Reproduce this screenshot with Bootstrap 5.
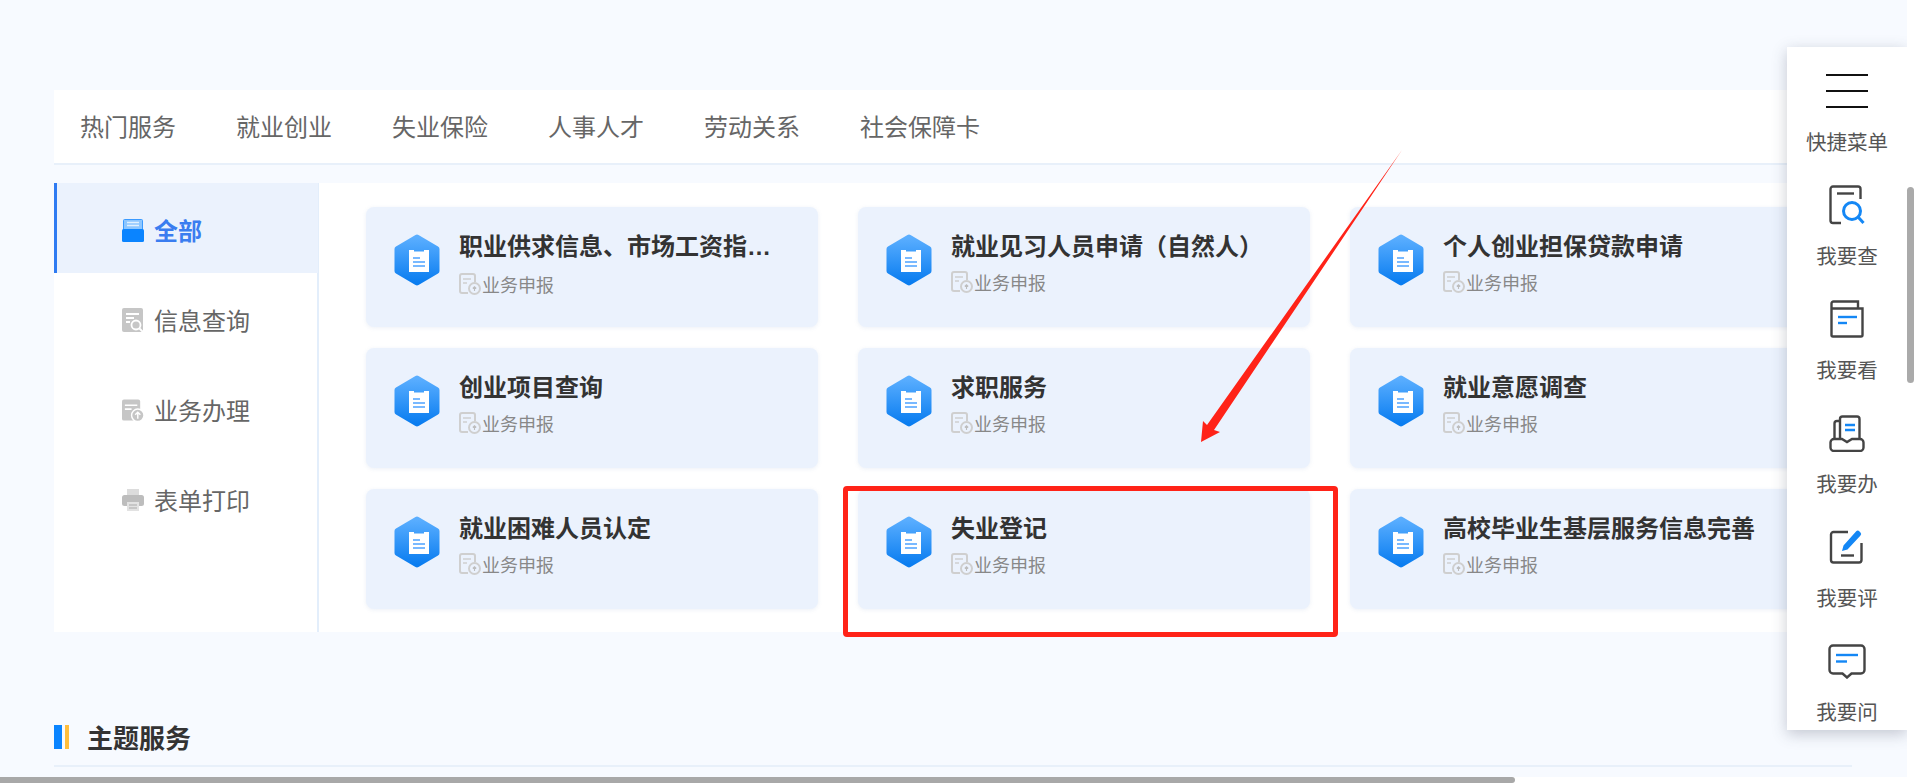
<!DOCTYPE html>
<html lang="zh-CN">
<head>
    <meta charset="UTF-8">
    <meta name="viewport" content="width=device-width, initial-scale=1.0">
    <title>热门服务</title>
    <link href="https://cdn.jsdelivr.net/npm/bootstrap@5.3.0/dist/css/bootstrap.min.css" rel="stylesheet">
    <style>
        html, body { height: 100%; overflow: hidden; background: #fff; }
        body { font-family: "Noto Sans CJK SC", "Liberation Sans", sans-serif; color: #333; }
        .page-view { width: 1907px; height: 777px; background: #f7faff; padding: 90px 55px 0 54px; overflow: hidden; position: relative; }

        /* tabs */
        .tab-bar { height: 75px; background: #fff; border-bottom: 2px solid #e8f0fa; padding-left: 26px; gap: 60px; }
        .tab-item { font-size: 24px; color: #666; line-height: 71px; }

        /* panel */
        .service-panel { height: 449px; margin-top: 18px; background: #fff; }
        .side-menu { width: 265px; flex: none; border-right: 2px solid #e3eefb; }
        .side-item { height: 90px; padding: 4px 0 0 68px; gap: 10px; font-size: 24px; color: #666; }
        .side-item.is-active { background: #ebf2fd; border-left: 3px solid #2f7bf2; padding-left: 65px; color: #3a7df0; font-weight: 700; margin-right: -1px; }
        .card-grid { display: grid; grid-template-columns: repeat(3, 452px); grid-auto-rows: 120px; column-gap: 40px; row-gap: 21px; padding: 24px 0 0 47px; }
        .svc-card { background: #ebf2fd; border: 0; border-radius: 8px; box-shadow: 0 1px 4px rgba(120, 150, 200, .14); padding: 27px 0 0 28px; gap: 19px; }
        .hex-icon { width: 46px; height: 52px; flex: none; }
        .svc-title { font-size: 24px; font-weight: 700; line-height: 26px; margin-top: -2px; color: #333; white-space: nowrap; }
        .svc-title-end { font-family: "Liberation Sans", sans-serif; }
        .svc-sub { margin-top: 12px; font-size: 18px; line-height: 24px; color: #888; gap: 1px; }

        /* section heading */
        .topic-head { margin-top: 93px; height: 42px; border-bottom: 2px solid #e8f0fa; }
        .topic-bar { width: 8px; height: 24px; background: #0a84ff; }
        .topic-bar2 { width: 4px; height: 24px; background: #ffbe3d; margin-left: 3px; }
        .topic-title { font-size: 26px; font-weight: 700; line-height: 26px; margin: -1px 0 0 18px; color: #333; }

        /* annotation over the page */
        .note-box { position: absolute; left: 843px; top: 486px; width: 495px; height: 151px; border: 5px solid #ff2318; border-radius: 4px; }
        .note-arrow { position: absolute; left: 0; top: 0; pointer-events: none; }

        /* floating quick menu */
        .quick-menu { position: absolute; left: 1787px; top: 47px; width: 120px; height: 683px; background: #fff; box-shadow: 0 4px 14px rgba(60, 70, 90, .28); }
        .quick-item { height: 114px; flex: none; }
        .quick-icon { height: 88px; }
        .quick-label { font-size: 20.5px; line-height: 16px; margin-top: -2px; color: #555; white-space: nowrap; }

        /* scrollbars */
        .bar-v { position: absolute; left: 1907px; top: 187px; width: 7px; height: 196px; background: #aaa; border-radius: 4px; }
        .bar-h { position: absolute; left: 0; top: 777px; width: 1515px; height: 6px; background: #a8a8a8; border-radius: 0 4px 4px 0; }
    </style>
</head>
<body>

    <!-- shared icons -->
    <svg width="0" height="0" class="position-absolute">
        <defs>
            <linearGradient id="hexFill" x1="0" y1="0" x2="0" y2="1">
                <stop offset="0" stop-color="#5aaeff"/>
                <stop offset="1" stop-color="#0a7df0"/>
            </linearGradient>
            <symbol id="hexDoc" viewBox="0 0 46 52">
                <path d="M23 3.500 42.500 15V37L23 48.500 3.500 37V15Z" fill="url(#hexFill)" stroke="url(#hexFill)" stroke-width="6" stroke-linejoin="round"/>
                <path d="M15 16h5v1.500h10V16h5v22H15z" fill="#fff"/>
                <path d="M19 24h7M19 28h12M19 32h12" stroke="#4da3ff" stroke-width="1.600" fill="none"/>
            </symbol>
            <symbol id="smallDoc" viewBox="0 0 22 22">
                <path d="M9 20H3a2 2 0 0 1-2-2V3a2 2 0 0 1 2-2h11a2 2 0 0 1 2 2v6" fill="none" stroke="#cfcfcf" stroke-width="2"/>
                <path d="M4 6h8M4 10h4" stroke="#cfcfcf" stroke-width="1.500"/>
                <circle cx="15.500" cy="15.500" r="5.500" fill="none" stroke="#cfcfcf" stroke-width="2"/>
                <path d="M15.500 18v-4M13.800 15.500l1.700-1.800 1.700 1.800" stroke="#bdbdbd" stroke-width="1.100" fill="none"/>
            </symbol>
        </defs>
    </svg>

    <div class="page-view">
        <!-- Tabs -->
        <div class="tab-bar d-flex">
            <div class="tab-item">热门服务</div>
            <div class="tab-item">就业创业</div>
            <div class="tab-item">失业保险</div>
            <div class="tab-item">人事人才</div>
            <div class="tab-item">劳动关系</div>
            <div class="tab-item">社会保障卡</div>
        </div>

        <!-- Service panel -->
        <div class="service-panel d-flex">
            <div class="side-menu">
                <div class="side-item is-active d-flex align-items-center">
                    <svg width="22" height="23" viewBox="0 0 22 23"><rect x="1.500" y=".5" width="19" height="11" rx="1" fill="#8cc6ff" stroke="#3a9aff"/><path d="M5 3.500h12M5 6.500h12" stroke="#dff0ff" stroke-width="1.300"/><rect y="10" width="22" height="13" rx="1.500" fill="#0a84ff"/></svg>
                    <span>全部</span>
                </div>
                <div class="side-item d-flex align-items-center">
                    <svg width="22" height="25" viewBox="0 0 22 25"><path d="M2 0h17a2 2 0 0 1 2 2v22H2a2 2 0 0 1-2-2V2a2 2 0 0 1 2-2z" fill="#c6c6c6"/><path d="M4 6h13M4 10h8M4 14h4" stroke="#fff" stroke-width="1.800"/><circle cx="14" cy="17" r="4.500" fill="#c6c6c6" stroke="#fff" stroke-width="1.800"/><path d="M17.500 20.500 21 24" stroke="#fff" stroke-width="1.800"/></svg>
                    <span>信息查询</span>
                </div>
                <div class="side-item d-flex align-items-center">
                    <svg width="22" height="23" viewBox="0 0 23 23"><path d="M2 0h15a2 2 0 0 1 2 2v20H2a2 2 0 0 1-2-2V2a2 2 0 0 1 2-2z" fill="#c6c6c6"/><path d="M3 6h13M3 10h7" stroke="#fff" stroke-width="1.800"/><circle cx="16.500" cy="16.500" r="6.500" fill="#c6c6c6" stroke="#fff" stroke-width="1.500"/><path d="M16.500 20v-6.500M13.800 16l2.700-2.700 2.700 2.700" stroke="#fff" stroke-width="1.500" fill="none"/></svg>
                    <span>业务办理</span>
                </div>
                <div class="side-item d-flex align-items-center">
                    <svg width="22" height="24" viewBox="0 0 22 24"><path d="M5 1h12v6H5z" fill="#dcdcdc"/><rect y="7" width="22" height="11" rx="2.500" fill="#bdbdbd"/><path d="M5 14h12v9H5z" fill="#e2e2e2"/><path d="M7 17h8M7 20h8" stroke="#bdbdbd" stroke-width="1.400"/></svg>
                    <span>表单打印</span>
                </div>
            </div>

            <div class="card-grid" id="cardGrid"></div>
        </div>

        <!-- Section heading -->
        <div class="topic-head d-flex align-items-start">
            <div class="topic-bar"></div>
            <div class="topic-bar2"></div>
            <div class="topic-title">主题服务</div>
        </div>

        <!-- Red annotation drawn on the screenshot -->
        <div class="note-box"></div>
        <svg class="note-arrow" width="1907" height="777" viewBox="0 0 1907 777">
            <path d="M1402 150 1214 430 1220 432 1201 442 1203 421 1207 425Z" fill="#ff2318"/>
        </svg>

        <!-- Quick menu -->
        <div class="quick-menu d-flex flex-column">
            <div class="quick-item d-flex flex-column align-items-center">
                <div class="quick-icon d-flex align-items-center">
                    <svg width="42" height="36" viewBox="0 0 42 36"><path d="M0 2h42M0 18h42M0 34h42" stroke="#111" stroke-width="2.200"/></svg>
                </div>
                <div class="quick-label">快捷菜单</div>
            </div>
            <div class="quick-item d-flex flex-column align-items-center">
                <div class="quick-icon d-flex align-items-center">
                    <svg width="36" height="40" viewBox="0 0 36 40" fill="none" stroke-width="2.400"><path d="M12 38H4a2.500 2.500 0 0 1-2.500-2.500V4A2.500 2.500 0 0 1 4 1.500h25A2.500 2.500 0 0 1 31.500 4v10" stroke="#444"/><path d="M8 8.500h17" stroke="#444"/><circle cx="23" cy="26" r="8.500" stroke="#1487f5" stroke-width="3"/><path d="M29.500 32.500 34.500 38" stroke="#1487f5" stroke-width="3"/></svg>
                </div>
                <div class="quick-label">我要查</div>
            </div>
            <div class="quick-item d-flex flex-column align-items-center">
                <div class="quick-icon d-flex align-items-center">
                    <svg width="34" height="38" viewBox="0 0 34 38" fill="none" stroke-width="2.400"><path d="M1.500 7v28A1.500 1.500 0 0 0 3 36.500h28a1.500 1.500 0 0 0 1.500-1.500V8.500H3A1.500 1.500 0 0 1 1.500 7z" stroke="#444"/><path d="M1.500 7V3.500a2 2 0 0 1 2-2H28V8" stroke="#444"/><path d="M8 17h19" stroke="#1487f5"/><path d="M8 23h9" stroke="#1487f5"/></svg>
                </div>
                <div class="quick-label">我要看</div>
            </div>
            <div class="quick-item d-flex flex-column align-items-center">
                <div class="quick-icon d-flex align-items-center">
                    <svg width="36" height="37" viewBox="0 0 36 37" fill="none" stroke-width="2.400"><path d="M11 24V4a2.500 2.500 0 0 1 2.500-2.500H28A2.500 2.500 0 0 1 30.500 4v20" stroke="#444"/><path d="M11 6H8a2.500 2.500 0 0 0-2.500 2.500V24" stroke="#444"/><path d="M13 24H5a3.500 3.500 0 0 0-3.500 3.500v5A3.500 3.500 0 0 0 5 36h26a3.500 3.500 0 0 0 3.500-3.500v-5A3.500 3.500 0 0 0 31 24H23l-5 3z" stroke="#444"/><path d="M16 10h10M16 15h10" stroke="#1487f5" stroke-width="2.600"/></svg>
                </div>
                <div class="quick-label">我要办</div>
            </div>
            <div class="quick-item d-flex flex-column align-items-center">
                <div class="quick-icon d-flex align-items-center">
                    <svg width="36" height="36" viewBox="0 0 36 36" fill="none" stroke-width="2.400"><path d="M19 3H4.500A2.500 2.500 0 0 0 2 5.500V31a2.500 2.500 0 0 0 2.500 2.500H30a2.500 2.500 0 0 0 2.500-2.500V14" stroke="#444"/><path d="M12 26.500h13" stroke="#444"/><path d="M13 22 14.500 16.500 27 2.500a2.400 2.400 0 0 1 3.500 0l.8.8a2.400 2.400 0 0 1 0 3.500L18.500 20.500z" fill="#1487f5"/></svg>
                </div>
                <div class="quick-label">我要评</div>
            </div>
            <div class="quick-item d-flex flex-column align-items-center">
                <div class="quick-icon d-flex align-items-center">
                    <svg width="38" height="35" viewBox="0 0 38 35" fill="none" stroke-width="2.400"><path d="M5 1.500h28A3.500 3.500 0 0 1 36.500 5v21a3.500 3.500 0 0 1-3.500 3.500H23.500L19 33.500l-4.500-4H5A3.500 3.500 0 0 1 1.500 26V5A3.500 3.500 0 0 1 5 1.500z" stroke="#444"/><path d="M8 11h22" stroke="#1487f5"/><path d="M8 17.500h11" stroke="#1487f5"/></svg>
                </div>
                <div class="quick-label">我要问</div>
            </div>
        </div>
    </div>

    <div class="bar-v"></div>
    <div class="bar-h"></div>

    <script src="https://cdn.jsdelivr.net/npm/bootstrap@5.3.0/dist/js/bootstrap.bundle.min.js"></script>
    <script>
        const services = [
            '职业供求信息、市场工资指<span class="svc-title-end">…</span>',
            "就业见习人员申请（自然人）",
            "个人创业担保贷款申请",
            "创业项目查询",
            "求职服务",
            "就业意愿调查",
            "就业困难人员认定",
            "失业登记",
            "高校毕业生基层服务信息完善"
        ];
        document.getElementById("cardGrid").innerHTML = services.map(name => `
            <div class="card svc-card flex-row align-items-start">
                <svg class="hex-icon"><use href="#hexDoc"/></svg>
                <div>
                    <div class="svc-title">${name}</div>
                    <div class="svc-sub d-flex align-items-center">
                        <svg width="22" height="22"><use href="#smallDoc"/></svg>
                        <span>业务申报</span>
                    </div>
                </div>
            </div>`).join("");
    </script>
</body>
</html>
